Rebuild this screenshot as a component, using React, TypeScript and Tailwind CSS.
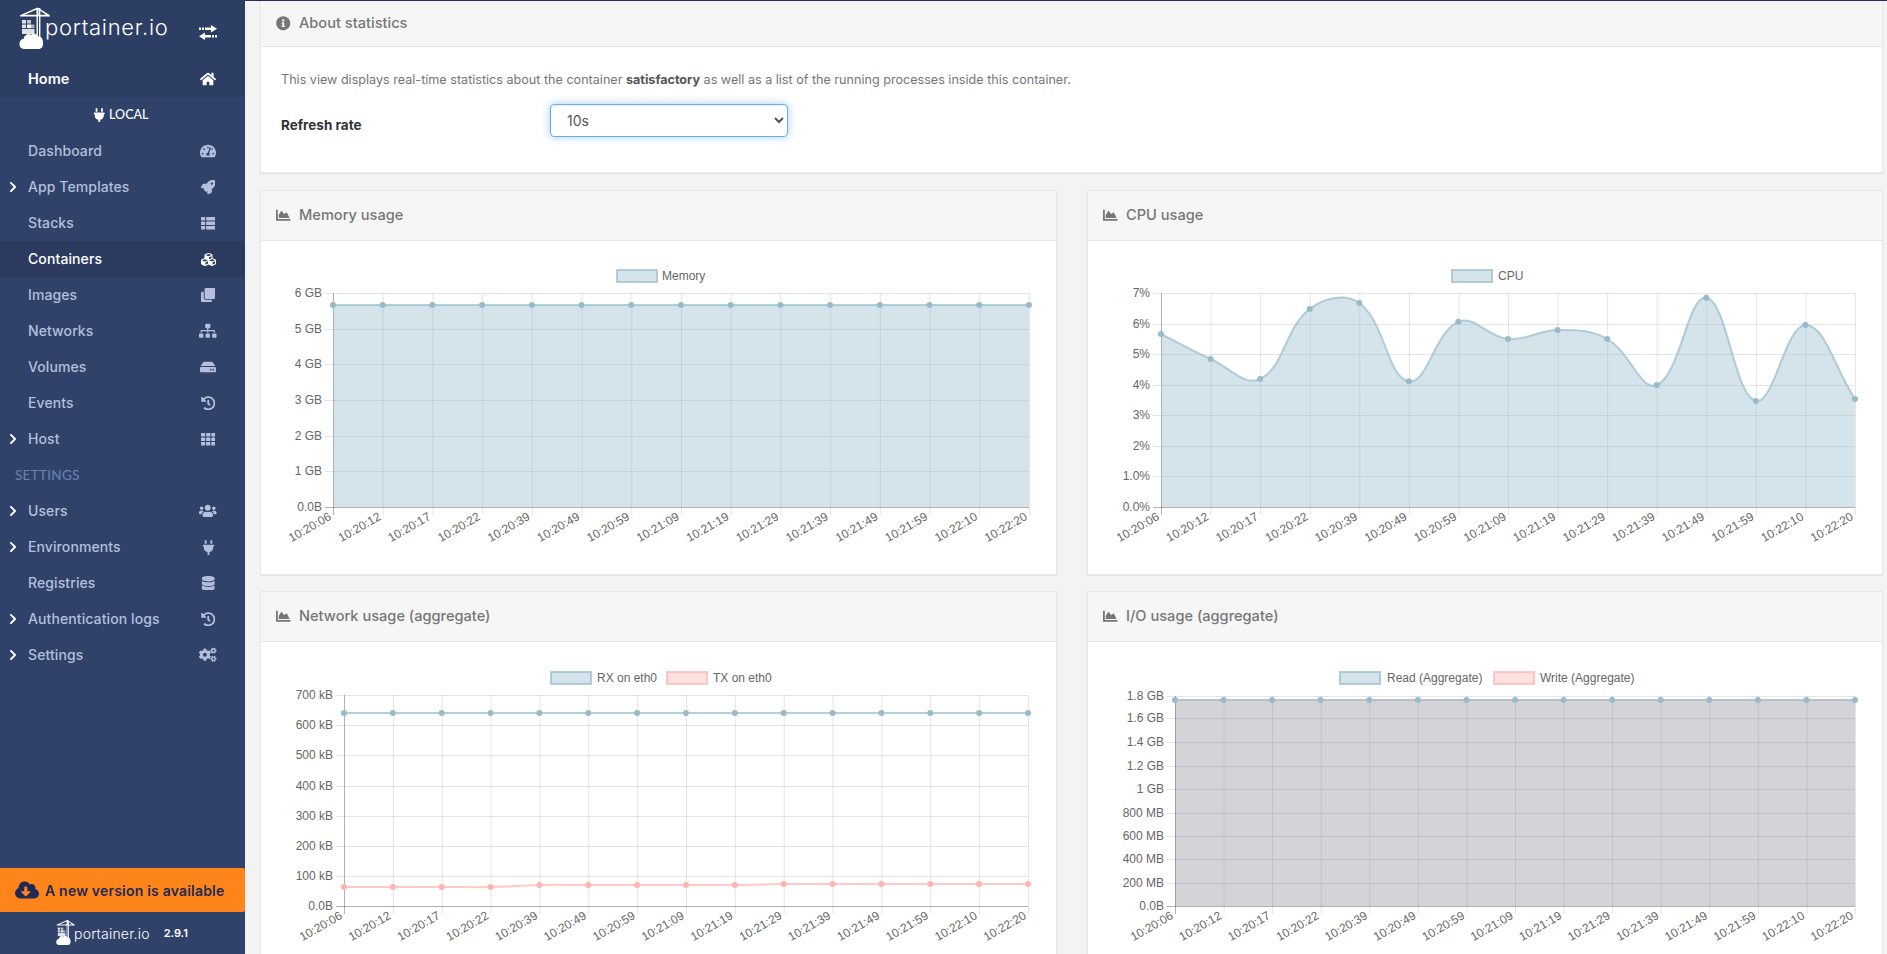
import type { ReactNode } from 'react';
import {
  FaChartArea,
  FaChevronRight,
  FaClone,
  FaCloudDownloadAlt,
  FaCogs,
  FaCubes,
  FaDatabase,
  FaHdd,
  FaHistory,
  FaHome,
  FaInfoCircle,
  FaPlug,
  FaRocket,
  FaSitemap,
  FaTachometerAlt,
  FaTh,
  FaThList,
  FaUsers,
} from 'react-icons/fa';

const LABELS = [
  '10:20:06', '10:20:12', '10:20:17', '10:20:22', '10:20:39', '10:20:49', '10:20:59', '10:21:09',
  '10:21:19', '10:21:29', '10:21:39', '10:21:49', '10:21:59', '10:22:10', '10:22:20',
];

const BLUE = { fill: 'rgba(151,187,205,0.4)', line: 'rgba(151,187,205,0.7)', point: '#97bbcd' };
const PINK = { fill: 'rgba(255,180,174,0.4)', line: 'rgba(255,180,174,0.7)', point: '#ffb4ae' };

type Series = { ys: number[]; fill?: string; line: string; point: string };
type Legend = { box: number; text: number; label: string; color: typeof BLUE };

interface ChartProps {
  panelX: number;
  panelY: number;
  height: number;
  left: number;
  right: number;
  top: number;
  bottom: number;
  legendY: number;
  ticks: [string, number][];
  series: Series[];
  legend: Legend[];
}

function splinePath(pts: [number, number][], top: number, bottom: number, left: number, right: number) {
  const clampX = (v: number) => Math.min(right, Math.max(left, v));
  const clampY = (v: number) => Math.min(bottom, Math.max(top, v));
  const ctrl = pts.map((p, i) => {
    const a = pts[Math.max(i - 1, 0)];
    const b = pts[Math.min(i + 1, pts.length - 1)];
    const d01 = Math.hypot(p[0] - a[0], p[1] - a[1]);
    const d12 = Math.hypot(b[0] - p[0], b[1] - p[1]);
    const s01 = d01 / (d01 + d12);
    const s12 = d12 / (d01 + d12);
    return {
      px: clampX(p[0] - 0.4 * s01 * (b[0] - a[0])),
      py: clampY(p[1] - 0.4 * s01 * (b[1] - a[1])),
      nx: clampX(p[0] + 0.4 * s12 * (b[0] - a[0])),
      ny: clampY(p[1] + 0.4 * s12 * (b[1] - a[1])),
    };
  });
  let d = `M${pts[0][0]} ${pts[0][1]}`;
  for (let i = 1; i < pts.length; i++) {
    d += ` C${ctrl[i - 1].nx} ${ctrl[i - 1].ny} ${ctrl[i].px} ${ctrl[i].py} ${pts[i][0]} ${pts[i][1]}`;
  }
  return d;
}

function Chart({ panelX, panelY, height, left, right, top, bottom, legendY, ticks, series, legend }: ChartProps) {
  const step = (right - left) / (LABELS.length - 1);
  const xs = LABELS.map((_, i) => left + i * step);
  const grid = 'rgba(0,0,0,0.1)';
  return (
    <svg
      viewBox={`${panelX} ${panelY} 794 ${height}`}
      className="block w-[794px]"
      style={{ height }}
      fontFamily="'Liberation Sans', Arial, sans-serif"
      fontSize="12"
      fill="#666"
    >
      {legend.map((l) => (
        <g key={l.label}>
          <rect x={l.box} y={legendY - 6} width={40} height={12} fill={l.color.fill} stroke={l.color.line} strokeWidth={2} />
          <text x={l.text} y={legendY + 4}>{l.label}</text>
        </g>
      ))}
      {ticks.map(([label, y], i) => (
        <g key={label}>
          <line x1={left - 8} x2={right} y1={y + 0.5} y2={y + 0.5} stroke={i === ticks.length - 1 ? 'rgba(0,0,0,0.3)' : grid} />
          <text x={left - 11} y={y + 3.5} textAnchor="end">{label}</text>
        </g>
      ))}
      {xs.map((x, i) => (
        <g key={LABELS[i]}>
          <line x1={x + 0.5} x2={x + 0.5} y1={top} y2={bottom + 8} stroke={i === 0 ? 'rgba(0,0,0,0.3)' : grid} />
          <text transform={`translate(${x - 1} ${bottom + 12}) rotate(-30)`} textAnchor="end">{LABELS[i]}</text>
        </g>
      ))}
      {series.map((s, n) => {
        const pts = xs.map((x, i) => [x, s.ys[i]] as [number, number]);
        const d = splinePath(pts, top, bottom, left, right);
        return (
          <g key={n}>
            {s.fill && <path d={`${d} L${right} ${bottom} L${left} ${bottom} Z`} fill={s.fill} />}
            <path d={d} fill="none" stroke={s.line} strokeWidth={2} />
            {pts.map(([x, y]) => (
              <circle key={x} cx={x} cy={y} r={3} fill={s.point} />
            ))}
          </g>
        );
      })}
    </svg>
  );
}

// crane + cloud mark, white on the sidebar
function Logo({ className }: { className: string }) {
  return (
    <svg viewBox="0 0 33 44" className={className} fill="#fff">
      <path d="M18.5 0.5 L1 8.2 V9.6 H31 V8.2 Z M18 2.6 V7.8 H5.5 Z M19.5 2.6 L27 7.8 H19.5 Z" fillRule="evenodd" />
      <rect x="17.5" y="1" width="1.4" height="30" />
      <rect x="20" y="1" width="1.4" height="30" />
      <rect x="3" y="13" width="4" height="3.6" opacity="0.85" />
      <rect x="8" y="13" width="4" height="3.6" opacity="0.7" />
      <rect x="3" y="17.5" width="4" height="3.6" opacity="0.85" />
      <rect x="8" y="17.5" width="4" height="3.6" />
      <rect x="12" y="17.5" width="3.5" height="3.6" opacity="0.6" />
      <rect x="3" y="22" width="12.5" height="5" opacity="0.85" />
      <path
        transform="translate(0 -13.7) scale(1 1.28)"
        d="M5 43.5 C1.5 43.5 0 41 0.6 38.5 C1 36.5 3 35.5 4.5 35.7 C5.5 32.5 9 31 12 32.3 C14 30.8 17.5 31.2 19 33.8 C21.5 33.2 24 35.2 24 38 C24.5 41.5 22.5 43.5 19.5 43.5 Z"
      />
    </svg>
  );
}

// the two dashed arrows of the sidebar toggle
function ToggleIcon() {
  return (
    <svg viewBox="0 0 18 15" className="h-[15px] w-[18px]" fill="#fff">
      <path d="M0 2.5h2v2.5H0zM3 2.5h2v2.5H3zM6 2.5h6V0l6 3.7-6 3.7V5H6z" />
      <path d="M18 10h-2v2.5h2zM15 10h-2v2.5h2zM12 10H6V7.6L0 11.3 6 15v-2.5h6z" />
    </svg>
  );
}

type NavItem = { label: string; icon: ReactNode; size: string; chevron?: boolean; active?: boolean };

const NAV: NavItem[] = [
  { label: 'Dashboard', icon: <FaTachometerAlt />, size: 'text-[16px]' },
  { label: 'App Templates', icon: <FaRocket />, size: 'text-[14.5px]', chevron: true },
  { label: 'Stacks', icon: <FaThList />, size: 'text-[14.5px]' },
  { label: 'Containers', icon: <FaCubes />, size: 'text-[15px]', active: true },
  { label: 'Images', icon: <FaClone />, size: 'text-[14.5px]' },
  { label: 'Networks', icon: <FaSitemap />, size: 'text-[17.5px]' },
  { label: 'Volumes', icon: <FaHdd />, size: 'text-[16px]' },
  { label: 'Events', icon: <FaHistory />, size: 'text-[14.5px]' },
  { label: 'Host', icon: <FaTh />, size: 'text-[14.5px]', chevron: true },
];

const NAV_SETTINGS: NavItem[] = [
  { label: 'Users', icon: <FaUsers />, size: 'text-[17.5px]', chevron: true },
  { label: 'Environments', icon: <FaPlug />, size: 'text-[15px]', chevron: true },
  { label: 'Registries', icon: <FaDatabase />, size: 'text-[14.5px]' },
  { label: 'Authentication logs', icon: <FaHistory />, size: 'text-[14.5px]', chevron: true },
  { label: 'Settings', icon: <FaCogs />, size: 'text-[17.5px]', chevron: true },
];

function NavRow({ item }: { item: NavItem }) {
  return (
    <div className={`flex h-[36px] items-center ${item.active ? 'bg-[#2b3b60] text-white' : 'text-[#b4bfdc]'}`}>
      <span className="flex w-[28px] shrink-0 pl-[7px] text-[12px] text-white">{item.chevron && <FaChevronRight />}</span>
      <span className="flex-1 pb-[2px] text-[14px] font-medium tracking-[0.1px]">{item.label}</span>
      <span className={`flex w-[20px] justify-center ${item.size}`}>{item.icon}</span>
      <span className="w-[27px]" />
    </div>
  );
}

function Sidebar() {
  return (
    <aside className="flex h-full w-[245px] shrink-0 flex-col bg-[#30426a]">
      <div className="bg-[#2d3e64]">
        <div className="flex h-[61px] items-center">
          <Logo className="mb-[4px] ml-[19px] h-[44px] w-[33px] shrink-0" />
          <span className="ml-[-7px] mt-[-8px] text-[22px] font-light leading-none tracking-[0.7px] text-white">portainer.io</span>
          <span className="ml-auto mr-[28px] mt-[3px]"><ToggleIcon /></span>
        </div>
        <div className="flex h-[36px] items-center font-semibold text-white">
          <span className="w-[28px]" />
          <span className="flex-1 text-[14.5px]">Home</span>
          <span className="flex w-[20px] justify-center text-[16px]"><FaHome /></span>
          <span className="w-[27px]" />
        </div>
      </div>
      <div className="flex h-[36px] items-center justify-center pr-[5px] text-[12.5px] font-medium text-white">
        <FaPlug className="mr-[3px] text-[14.5px]" />
        <span className="font-['Lato',sans-serif]">LOCAL</span>
      </div>
      {NAV.map((item) => <NavRow key={item.label} item={item} />)}
      <div className="flex h-[36px] items-center pl-[15px] font-['Lato',sans-serif] text-[13.5px] tracking-[0.3px] text-[#6d82b3]">SETTINGS</div>
      {NAV_SETTINGS.map((item) => <NavRow key={item.label} item={item} />)}
      <div className="flex-1" />
      <div className="flex h-[44px] items-center rounded-r-[2px] bg-[#ff851b] pl-[15px] text-[#1c2a55]">
        <FaCloudDownloadAlt className="text-[24px]" />
        <span className="ml-[6px] text-[14px] font-semibold tracking-[0.2px]">A new version is available</span>
      </div>
      <div className="flex h-[42px] items-center pl-[56px] text-white">
        <Logo className="h-[28px] w-[20px] shrink-0" />
        <span className="ml-[-2px] text-[14px] font-light tracking-[0.2px]">portainer.io</span>
        <span className="ml-[14px] text-[11px] font-semibold">2.9.1</span>
      </div>
    </aside>
  );
}

function PanelHeader({ icon, title, className }: { icon: ReactNode; title: string; className: string }) {
  return (
    <div className={`flex items-center border-b border-[#e6e6e6] bg-[#f6f6f6] pl-[15px] text-[#767676] ${className}`}>
      <span className="flex w-[23px] text-[14.5px]">{icon}</span>
      <span className="text-[14.6px] font-medium">{title}</span>
    </div>
  );
}

function ChartPanel({ title, children }: { title: string; children: ReactNode }) {
  return (
    <div className="border border-[#e8e8e8] bg-white shadow-[0_1px_1px_rgba(0,0,0,0.05)]">
      <PanelHeader icon={<FaChartArea />} title={title} className="h-[50px]" />
      {children}
    </div>
  );
}

const memTicks: [string, number][] = [['6 GB', 293], ['5 GB', 329], ['4 GB', 364], ['3 GB', 400], ['2 GB', 436], ['1 GB', 471], ['0.0B', 507]];
const cpuTicks: [string, number][] = [['7%', 293], ['6%', 324], ['5%', 354], ['4%', 385], ['3%', 415], ['2%', 446], ['1.0%', 476], ['0.0%', 507]];
const netTicks: [string, number][] = [['700 kB', 695], ['600 kB', 725], ['500 kB', 755], ['400 kB', 786], ['300 kB', 816], ['200 kB', 846], ['100 kB', 876], ['0.0B', 906]];
const ioTicks: [string, number][] = [['1.8 GB', 696], ['1.6 GB', 718], ['1.4 GB', 742], ['1.2 GB', 766], ['1 GB', 789], ['800 MB', 813], ['600 MB', 836], ['400 MB', 859], ['200 MB', 883], ['0.0B', 906]];

const flat = (y: number) => LABELS.map(() => y);
const cpuY = [462, 537, 597, 387, 369, 604, 425, 477, 450, 477, 615, 353, 663, 435, 657].map((v) => 180 + v / 3);

export default function App() {
  return (
    <div className="flex h-[954px] w-[1887px] overflow-hidden bg-[#f3f3f3] font-['Inter','Open_Sans',sans-serif]">
      <Sidebar />
      <main className="flex-1 overflow-hidden">
        <div className="h-px bg-[#2c2c54]" />
        <div className="pl-[15px] pr-[4px]">
          <div className="h-[172px] border border-t-0 border-[#e8e8e8] bg-white shadow-[0_1px_1px_rgba(0,0,0,0.05)]">
            <PanelHeader icon={<FaInfoCircle />} title="About statistics" className="h-[46px]" />
            <div className="px-[20px] pt-[24px] text-[12.6px] text-[#767676]">
              <p className="leading-[18px]">
                This view displays real-time statistics about the container <b className="font-bold text-[#555]">satisfactory</b> as well as a list of the running processes inside this container.
              </p>
              <div className="mt-[15px] flex items-start">
                <label className="mt-[12px] w-[269px] text-[13.5px] font-bold leading-[18px] text-[#333]">Refresh rate</label>
                <select
                  defaultValue="10s"
                  className="h-[33px] w-[238px] rounded-[4px] border border-[#66afe9] bg-white px-[12px] text-[14px] text-[#555] shadow-[inset_0_1px_1px_rgba(0,0,0,0.075),0_0_8px_rgba(102,175,233,0.6)] outline-none"
                >
                  <option>5s</option>
                  <option>10s</option>
                  <option>30s</option>
                </select>
              </div>
            </div>
          </div>

          <div className="mt-[17px] grid grid-cols-[797px_796px] gap-x-[30px] gap-y-[16px]">
            <ChartPanel title="Memory usage">
              <Chart
                panelX={261} panelY={241} height={333}
                left={333} right={1029} top={293} bottom={507} legendY={276}
                ticks={memTicks}
                series={[{ ys: flat(305), ...BLUE }]}
                legend={[{ box: 617, text: 662, label: 'Memory', color: BLUE }]}
              />
            </ChartPanel>
            <ChartPanel title="CPU usage">
              <Chart
                panelX={1088} panelY={241} height={333}
                left={1161} right={1855} top={293} bottom={507} legendY={276}
                ticks={cpuTicks}
                series={[{ ys: cpuY, ...BLUE }]}
                legend={[{ box: 1452, text: 1498, label: 'CPU', color: BLUE }]}
              />
            </ChartPanel>
            <ChartPanel title="Network usage (aggregate)">
              <Chart
                panelX={261} panelY={642} height={333}
                left={344} right={1028} top={695} bottom={906} legendY={678}
                ticks={netTicks}
                series={[
                  { ys: flat(713), line: BLUE.line, point: BLUE.point },
                  { ys: [887, 887, 887, 887, 885, 885, 885, 885, 885, 884, 884, 884, 884, 884, 884], line: PINK.line, point: PINK.point },
                ]}
                legend={[
                  { box: 551, text: 597, label: 'RX on eth0', color: BLUE },
                  { box: 667, text: 713, label: 'TX on eth0', color: PINK },
                ]}
              />
            </ChartPanel>
            <ChartPanel title="I/O usage (aggregate)">
              <Chart
                panelX={1088} panelY={642} height={333}
                left={1175} right={1855} top={696} bottom={906} legendY={678}
                ticks={ioTicks}
                series={[{ ys: flat(700), fill: 'rgba(120,120,135,0.32)', line: '#b9c2c9', point: BLUE.point }]}
                legend={[
                  { box: 1340, text: 1387, label: 'Read (Aggregate)', color: BLUE },
                  { box: 1494, text: 1540, label: 'Write (Aggregate)', color: PINK },
                ]}
              />
            </ChartPanel>
          </div>
        </div>
      </main>
    </div>
  );
}
